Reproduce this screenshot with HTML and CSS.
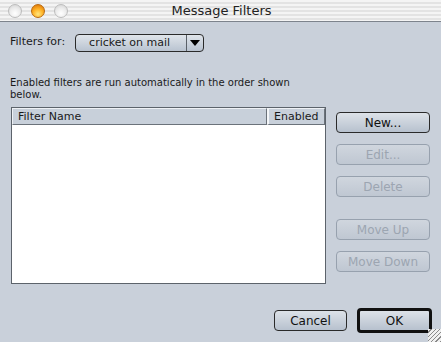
FILE: index.html
```html
<!DOCTYPE html>
<html lang="en">
<head>
  <meta charset="UTF-8" />
  <title>Message Filters</title>
  <link rel="stylesheet" href="styles.css">
</head>
<body>
  <div class="window">
    <div class="titlebar">
      <div class="lights">
        <span class="light"></span>
        <span class="light active"></span>
        <span class="light"></span>
      </div>
      <div class="title">Message Filters</div>
    </div>

    <div class="content">
      <div class="filters-for">
        <span class="label">Filters for:</span>
        <div class="popup">
          <span class="popup-text">cricket on mail</span>
          <span class="popup-arrow"></span>
        </div>
      </div>

      <p class="desc">Enabled filters are run automatically in the order shown below.</p>

      <div class="main">
        <div class="table">
          <div class="table-head">
            <div class="col name">Filter Name</div>
            <div class="col enabled">Enabled</div>
          </div>
          <div class="table-body"></div>
        </div>

        <div class="side-buttons">
          <button class="btn">New...</button>
          <button class="btn" disabled>Edit...</button>
          <button class="btn" disabled>Delete</button>
          <button class="btn spaced" disabled>Move Up</button>
          <button class="btn" disabled>Move Down</button>
        </div>
      </div>

      <div class="footer">
        <button class="btn cancel">Cancel</button>
        <button class="btn ok">OK</button>
      </div>
    </div>

    <div class="grip"></div>
  </div>
</body>
</html>
```

FILE: styles.css
```css
* {
  box-sizing: border-box;
  margin: 0;
  padding: 0;
}

body {
  background-color: #c9d0da;
  font-family: 'DejaVu Sans', sans-serif;
  font-size: 11px;
  color: #1a1a1a;
}

.window {
  position: relative;
  width: 441px;
  height: 342px;
  display: flex;
  flex-direction: column;
}

/* title bar */
.titlebar {
  height: 22px;
  display: flex;
  align-items: center;
  border-bottom: 1px solid #7d838c;
  background: repeating-linear-gradient(to bottom, #f4f4f4 0px, #f4f4f4 2px, #e3e3e3 2px, #e3e3e3 4px);
}

.lights {
  display: flex;
  gap: 9px;
  padding-left: 8px;
}

.light {
  width: 14px;
  height: 14px;
  border-radius: 50%;
  border: 1px solid #bcbcbc;
  background: radial-gradient(circle at 50% 70%, #ffffff 0%, #ececec 50%, #cfcfcf 100%);
}

.light.active {
  border-color: #b86a10;
  background: radial-gradient(circle at 50% 75%, #ffe680 0%, #ffb428 45%, #d86a00 100%);
}

.title {
  flex: 1;
  text-align: center;
  font-size: 13px;
  color: #222;
  margin-right: 66px;
}

/* content */
.content {
  flex: 1;
  display: flex;
  flex-direction: column;
  padding: 12px 9px 0 10px;
}

.filters-for {
  display: flex;
  align-items: flex-start;
  gap: 10px;
}

.label {
  margin-top: 1px;
}

.popup {
  width: 129px;
  height: 18px;
  display: flex;
  border: 1px solid #2a2a2a;
  border-radius: 4px;
  background: linear-gradient(to bottom, #dfe4ea, #b9c3d0);
  overflow: hidden;
}

.popup-text {
  flex: 1;
  padding-left: 13px;
  line-height: 16px;
}

.popup-arrow {
  width: 17px;
  border-left: 1px solid #5a6068;
  display: flex;
  align-items: center;
  justify-content: center;
}

.popup-arrow::after {
  content: "";
  border-left: 5px solid transparent;
  border-right: 5px solid transparent;
  border-top: 6px solid #000;
}

.desc {
  margin-top: 25px;
  width: 300px;
  font-size: 10px;
  line-height: 12px;
}

.main {
  display: flex;
  margin-top: 6px;
}

/* table */
.table {
  width: 315px;
  height: 177px;
  margin-left: 1px;
  border: 1px solid #5c636b;
  background: #fff;
  display: flex;
  flex-direction: column;
}

.table-head {
  display: flex;
  height: 17px;
  background: #c8d0da;
}

.col {
  height: 17px;
  line-height: 15px;
  border-top: 1px solid #eef1f5;
  border-left: 1px solid #eef1f5;
  border-bottom: 1px solid #6b727a;
  border-right: 1px solid #6b727a;
  padding-left: 5px;
}

.col.name {
  flex: 1;
}

.col.enabled {
  width: 58px;
  border-left: 2px solid #f4f6f8;
}

.table-body {
  flex: 1;
}

/* buttons */
.side-buttons {
  display: flex;
  flex-direction: column;
  gap: 11px;
  margin-left: 10px;
  margin-top: 5px;
}

.btn {
  width: 94px;
  height: 21px;
  border: 1px solid #2a2a2a;
  border-radius: 4px;
  background: linear-gradient(to bottom, #dde2e8, #b7c1ce);
  font-family: 'DejaVu Sans', sans-serif;
  font-size: 12px;
  color: #111;
}

.btn:disabled {
  border-color: #97a1ae;
  color: #9ca5b1;
  background: linear-gradient(to bottom, #d0d6de, #bfc7d2);
}

.btn.spaced {
  margin-top: 11px;
}

.footer {
  display: flex;
  justify-content: flex-end;
  gap: 10px;
  margin-top: auto;
  margin-bottom: 9px;
}

.btn.cancel {
  width: 73px;
  margin-top: 2px;
}

.btn.ok {
  width: 75px;
  height: 25px;
  border: 3px solid #111;
}

/* resize grip */
.grip {
  position: absolute;
  right: 0;
  bottom: 0;
  width: 13px;
  height: 13px;
  background: repeating-linear-gradient(135deg, #f0f0f0 0px, #f0f0f0 2px, #8a8a8a 2px, #8a8a8a 3px);
}
```
